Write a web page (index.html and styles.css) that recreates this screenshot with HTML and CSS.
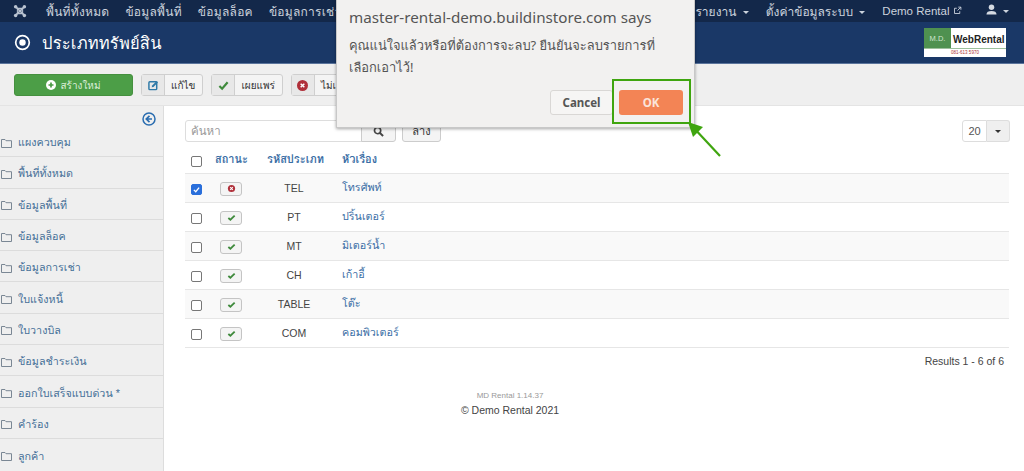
FILE: index.html
```html
<!DOCTYPE html>
<html lang="th">
<head>
<meta charset="utf-8">
<title>ประเภททรัพย์สิน</title>
<link rel="stylesheet" href="styles.css">
</head>
<body>
<nav class="topbar">
  <svg class="joomla" viewBox="0 0 16 16" width="14" height="14"><path d="M3.500 3.500l9 9M12.500 3.500l-9 9" stroke="#b9c3d1" stroke-width="2" fill="none"/><path d="M5 5h6v6H5z" fill="none" stroke="#b9c3d1" stroke-width="1.200"/><circle cx="3" cy="3" r="2" fill="#b9c3d1"/><circle cx="13" cy="3" r="2" fill="#b9c3d1"/><circle cx="3" cy="13" r="2" fill="#b9c3d1"/><circle cx="13" cy="13" r="2" fill="#b9c3d1"/></svg>
  <ul class="menu menu-left">
    <li>พื้นที่ทั้งหมด</li>
    <li>ข้อมูลพื้นที่</li>
    <li>ข้อมูลล็อค</li>
    <li>ข้อมูลการเช่า</li>
  </ul>
  <ul class="menu menu-right">
    <li>รายงาน <span class="caret"></span></li>
    <li>ตั้งค่าข้อมูลระบบ <span class="caret"></span></li>
    <li class="latin">Demo Rental <svg viewBox="0 0 12 12" width="9" height="9"><path d="M9 7v3H2V3h3M7 1.500h3.500V5M10.500 1.500L6 6" stroke="#c8d0dc" fill="none" stroke-width="1.200"/></svg></li>
    <li class="user"><svg viewBox="0 0 12 12" width="11" height="11"><circle cx="6" cy="3.500" r="3" fill="#d5dae2"/><path d="M0.500 11.500c0-3 2-4 5.500-4s5.500 1 5.500 4z" fill="#d5dae2"/></svg> <span class="caret"></span></li>
  </ul>
</nav>
<header class="titlebar">
  <div class="title">
    <svg viewBox="0 0 18 18" width="17" height="17"><circle cx="9" cy="9" r="7.200" stroke="#fff" stroke-width="1.800" fill="none"/><circle cx="9" cy="9" r="3.400" fill="#fff"/></svg>
    <h1>ประเภททรัพย์สิน</h1>
  </div>
  <div class="logo">
    <div class="logo-top"><span class="logo-md">M.D.</span><span class="logo-web">WebRental</span></div>
    <div class="logo-tel">081-613 5970</div>
  </div>
</header>
<div class="toolbar">
  <button class="btn-new"><svg viewBox="0 0 12 12" width="10" height="10"><circle cx="6" cy="6" r="6" fill="#fff"/><path d="M6 3v6M3 6h6" stroke="#4a9a44" stroke-width="2"/></svg> สร้างใหม่</button>
  <div class="tool"><span class="tool-icon"><svg viewBox="0 0 12 12" width="11" height="11"><rect x="1" y="2" width="8.500" height="8.500" rx="1" fill="none" stroke="#2f7aa8" stroke-width="1.600"/><path d="M4 8l.5-2 5-5 1.500 1.500-5 5z" fill="#2f7aa8"/></svg></span><span class="tool-label">แก้ไข</span></div>
  <div class="tool"><span class="tool-icon"><svg viewBox="0 0 12 12" width="11" height="11"><path d="M1.500 6.500l3 3 6-7" fill="none" stroke="#3f8a3c" stroke-width="2.400"/></svg></span><span class="tool-label">เผยแพร่</span></div>
  <div class="tool"><span class="tool-icon"><svg viewBox="0 0 12 12" width="11" height="11"><circle cx="6" cy="6" r="6" fill="#b0303a"/><path d="M4 4l4 4M8 4l-4 4" stroke="#fff" stroke-width="1.600"/></svg></span><span class="tool-label">ไม่เผยแพร่</span></div>
</div>
<main class="layout">
  <aside class="sidebar">
    <div class="collapse"><svg viewBox="0 0 14 14" width="14" height="14"><circle cx="7" cy="7" r="6" fill="none" stroke="#2a6db0" stroke-width="1.500"/><path d="M7.500 3.800L4.300 7l3.200 3.200M4.500 7h5.500" fill="none" stroke="#2a6db0" stroke-width="1.700"/></svg></div>
    <ul class="side-list">
      <li><svg class="folder" viewBox="0 0 11 10"><path d="M.5 1.500h3.500l1 1.200h5.500v6.800H.5z" fill="none" stroke="#7a8794"/></svg>แผงควบคุม</li>
      <li><svg class="folder" viewBox="0 0 11 10"><path d="M.5 1.500h3.500l1 1.200h5.500v6.800H.5z" fill="none" stroke="#7a8794"/></svg>พื้นที่ทั้งหมด</li>
      <li><svg class="folder" viewBox="0 0 11 10"><path d="M.5 1.500h3.500l1 1.200h5.500v6.800H.5z" fill="none" stroke="#7a8794"/></svg>ข้อมูลพื้นที่</li>
      <li><svg class="folder" viewBox="0 0 11 10"><path d="M.5 1.500h3.500l1 1.200h5.500v6.800H.5z" fill="none" stroke="#7a8794"/></svg>ข้อมูลล็อค</li>
      <li><svg class="folder" viewBox="0 0 11 10"><path d="M.5 1.500h3.500l1 1.200h5.500v6.800H.5z" fill="none" stroke="#7a8794"/></svg>ข้อมูลการเช่า</li>
      <li><svg class="folder" viewBox="0 0 11 10"><path d="M.5 1.500h3.500l1 1.200h5.500v6.800H.5z" fill="none" stroke="#7a8794"/></svg>ใบแจ้งหนี้</li>
      <li><svg class="folder" viewBox="0 0 11 10"><path d="M.5 1.500h3.500l1 1.200h5.500v6.800H.5z" fill="none" stroke="#7a8794"/></svg>ใบวางบิล</li>
      <li><svg class="folder" viewBox="0 0 11 10"><path d="M.5 1.500h3.500l1 1.200h5.500v6.800H.5z" fill="none" stroke="#7a8794"/></svg>ข้อมูลชำระเงิน</li>
      <li><svg class="folder" viewBox="0 0 11 10"><path d="M.5 1.500h3.500l1 1.200h5.500v6.800H.5z" fill="none" stroke="#7a8794"/></svg>ออกใบเสร็จแบบด่วน *</li>
      <li><svg class="folder" viewBox="0 0 11 10"><path d="M.5 1.500h3.500l1 1.200h5.500v6.800H.5z" fill="none" stroke="#7a8794"/></svg>คำร้อง</li>
      <li><svg class="folder" viewBox="0 0 11 10"><path d="M.5 1.500h3.500l1 1.200h5.500v6.800H.5z" fill="none" stroke="#7a8794"/></svg>ลูกค้า</li>
    </ul>
  </aside>
  <section class="content">
    <div class="filters">
      <div class="search"><span class="search-input">ค้นหา</span><span class="search-btn"><svg viewBox="0 0 12 12" width="11" height="11"><circle cx="5" cy="5" r="3.400" fill="none" stroke="#444" stroke-width="1.800"/><path d="M7.500 7.500L11 11" stroke="#444" stroke-width="2.200"/></svg></span><span class="clear-btn">ล้าง</span></div>
      <div class="limit"><span class="limit-val">20</span><span class="limit-arrow"><span class="caret dark"></span></span></div>
    </div>
    <table class="grid">
      <thead><tr><th class="c-check"><span class="cb"></span></th><th class="c-status">สถานะ</th><th class="c-code">รหัสประเภท</th><th>หัวเรื่อง</th></tr></thead>
      <tbody>
        <tr><td class="c-check"><span class="cb on"><svg viewBox="0 0 12 12"><path d="M2.500 6.500l2.500 2.500 4.500-5.500" fill="none" stroke="#fff" stroke-width="1.800"/></svg></span></td><td class="c-status"><span class="st"><svg viewBox="0 0 10 10"><circle cx="5" cy="5" r="4" fill="#b0303a"/><path d="M3.500 3.500l3 3M6.500 3.500l-3 3" stroke="#fff" stroke-width="1.200"/></svg></span></td><td class="c-code">TEL</td><td class="t-link">โทรศัพท์</td></tr>
        <tr><td class="c-check"><span class="cb"></span></td><td class="c-status"><span class="st"><svg viewBox="0 0 10 10"><path d="M1.500 5.500l2.300 2 4.700-4.500" fill="none" stroke="#3f8a3c" stroke-width="2"/></svg></span></td><td class="c-code">PT</td><td class="t-link">ปริ้นเตอร์</td></tr>
        <tr><td class="c-check"><span class="cb"></span></td><td class="c-status"><span class="st"><svg viewBox="0 0 10 10"><path d="M1.500 5.500l2.300 2 4.700-4.500" fill="none" stroke="#3f8a3c" stroke-width="2"/></svg></span></td><td class="c-code">MT</td><td class="t-link">มิเตอร์น้ำ</td></tr>
        <tr><td class="c-check"><span class="cb"></span></td><td class="c-status"><span class="st"><svg viewBox="0 0 10 10"><path d="M1.500 5.500l2.300 2 4.700-4.500" fill="none" stroke="#3f8a3c" stroke-width="2"/></svg></span></td><td class="c-code">CH</td><td class="t-link">เก้าอี้</td></tr>
        <tr><td class="c-check"><span class="cb"></span></td><td class="c-status"><span class="st"><svg viewBox="0 0 10 10"><path d="M1.500 5.500l2.300 2 4.700-4.500" fill="none" stroke="#3f8a3c" stroke-width="2"/></svg></span></td><td class="c-code">TABLE</td><td class="t-link">โต๊ะ</td></tr>
        <tr><td class="c-check"><span class="cb"></span></td><td class="c-status"><span class="st"><svg viewBox="0 0 10 10"><path d="M1.500 5.500l2.300 2 4.700-4.500" fill="none" stroke="#3f8a3c" stroke-width="2"/></svg></span></td><td class="c-code">COM</td><td class="t-link">คอมพิวเตอร์</td></tr>
      </tbody>
    </table>
    <p class="results">Results 1 - 6 of 6</p>
    <div class="footer">
      <p class="version">MD Rental 1.14.37</p>
      <p class="copy">© Demo Rental 2021</p>
    </div>
  </section>
</main>
<div class="dialog">
  <p class="d-title">master-rental-demo.buildinstore.com says</p>
  <p class="d-msg">คุณแน่ใจแล้วหรือที่ต้องการจะลบ? ยืนยันจะลบรายการที่เลือกเอาไว้!</p>
  <div class="d-actions"><button class="d-cancel">Cancel</button><button class="d-ok">OK</button></div>
</div>
<div class="ok-mark"></div>
<svg class="ok-arrow" viewBox="0 0 40 40" width="40" height="40"><path d="M4 4L32 34" stroke="#3fa50f" stroke-width="2.200" fill="none"/><path d="M0 0L15 5L5 15z" fill="#3fa50f"/></svg>
</body>
</html>
```

FILE: styles.css
```css
* { box-sizing: border-box; }
html, body { margin: 0; padding: 0; }
body {
  width: 1024px; height: 471px; overflow: hidden; position: relative;
  font-family: "Liberation Sans", Loma, Garuda, "Noto Sans Thai", "Noto Sans", sans-serif;
  font-size: 11px; color: #333; background: #fff;
}
ul { list-style: none; margin: 0; padding: 0; }
p { margin: 0; }

.topbar {
  height: 22px; background: #13284a; color: #ccd3dd;
  display: flex; align-items: center; font-size: 12px; padding-left: 13px;
}
.joomla { flex: none; margin-right: 19px; }
.menu { display: flex; align-items: center; }
.menu li { white-space: nowrap; }
.menu-left { gap: 16px; }
.menu-left li { letter-spacing: .25px; }
.menu-right { margin-left: auto; gap: 17px; padding-right: 15px; }
.menu li.latin { font-size: 11.500px; }
.menu li.user { margin-left: 7px; }
.caret {
  display: inline-block; width: 0; height: 0; vertical-align: middle; margin-left: 3px;
  border-left: 3px solid transparent; border-right: 3px solid transparent; border-top: 3px solid #ccd3dd;
}
.caret.dark { border-top-color: #333; margin: 0; }

.titlebar {
  height: 42px; background: #1a3867; border-bottom: 1px solid #5a749c;
  display: flex; align-items: center; justify-content: space-between; padding: 0 18px 0 14px;
}
.title { display: flex; align-items: center; gap: 11px; color: #fff; }
h1 { margin: 0; font-size: 16.500px; font-weight: 400; letter-spacing: .2px; }
.logo { width: 82px; height: 29px; background: #fff; display: flex; flex-direction: column; }
.logo-top { display: flex; height: 21px; align-items: stretch; border-bottom: 1px solid #9cc09c; }
.logo-md { width: 27px; background: #4f9150; color: #cfe5cf; font-size: 7.500px; display: flex; align-items: center; justify-content: center; }
.logo-web { font-size: 10px; font-weight: 700; color: #222; display: flex; align-items: center; padding: 2px 0 0 2px; }
.logo-tel { font-size: 4.500px; color: #a33; text-align: center; line-height: 8px; }

.toolbar {
  height: 42px; background: #efefef; border-bottom: 1px solid #e4e4e4;
  display: flex; align-items: flex-start; padding: 10px 0 0 14px; gap: 8px;
}
.btn-new {
  width: 119px; height: 22px; border: 1px solid #45903f; border-radius: 3px;
  background: #4c9e47; color: #dcefda; font: inherit; font-size: 10px;
  display: flex; align-items: center; justify-content: center; gap: 4px; padding: 0;
}
.tool {
  height: 22px; display: flex; align-items: stretch; background: #f4f4f4;
  border: 1px solid #cfcfcf; border-radius: 3px; font-size: 10px;
}
.tool-icon { width: 23px; display: flex; align-items: center; justify-content: center; background: #e8e8e8; border-right: 1px solid #cfcfcf; }
.tool-label { padding: 0 7px 0 6px; display: flex; align-items: center; }

.layout { display: flex; height: 365px; }
.sidebar { width: 164px; flex: none; background: #efefef; border-right: 1px solid #ddd; }
.collapse { height: 20px; display: flex; justify-content: flex-end; align-items: center; padding: 6px 7px 0 0; }
.side-list li {
  height: 31.300px; display: flex; align-items: center; gap: 6px; padding-top: 3px;
  font-size: 10.750px; color: #466f98; border-bottom: 1px solid #dcdcdc;
}
.side-list li:last-child { border-bottom: 0; }
.folder { width: 11px; height: 10px; flex: none; margin-left: 1px; }

.content { flex: 1; padding: 14px 14px 0 21px; min-width: 0; }
.filters { display: flex; justify-content: space-between; align-items: flex-start; height: 23px; }
.search { display: flex; align-items: stretch; height: 22px; }
.search-input { width: 177px; border: 1px solid #ddd; border-radius: 3px 0 0 3px; color: #999; font-size: 11.500px; padding: 0 5px; display: flex; align-items: center; }
.search-btn { width: 35px; background: #f4f4f4; border: 1px solid #ccc; border-radius: 0 3px 3px 0; display: flex; align-items: center; justify-content: center; margin-left: -1px; }
.clear-btn { width: 39px; margin-left: 6px; background: #f4f4f4; border: 1px solid #ccc; border-radius: 3px; font-size: 11px; display: flex; align-items: center; justify-content: center; }
.limit { display: flex; height: 22px; }
.limit-val { width: 25px; border: 1px solid #ddd; border-radius: 3px 0 0 3px; color: #555; font-size: 11px; display: flex; align-items: center; justify-content: center; }
.limit-arrow { width: 23px; background: #efefef; border: 1px solid #ddd; border-left: 0; border-radius: 0 3px 3px 0; display: flex; align-items: center; justify-content: center; }

.grid { width: 824px; border-collapse: collapse; margin-top: 3px; table-layout: fixed; }
.grid th { height: 27px; text-align: left; font-size: 11px; color: #3a6ea5; font-weight: 700; padding: 0; white-space: nowrap; }
.grid td { height: 29px; padding: 0; border-top: 1px solid #e6e6e6; font-size: 10.500px; color: #444; }
.grid tbody tr:nth-child(odd) { background: #f9f9f9; }
.grid tbody tr:last-child td { border-bottom: 1px solid #e6e6e6; }
.grid .c-check { width: 30px; padding-left: 6px; vertical-align: middle; }
.grid .c-status { width: 52px; }
.grid td.c-status { padding-left: 5px; }
.grid .c-code { width: 75px; text-align: center; padding-right: 21px; }
.grid td.t-link { color: #3a6ea5; font-size: 10.750px; padding-left: 0; }
.cb { display: block; width: 11px; height: 11px; margin-top: 4px; border: 1px solid #777; border-radius: 2px; background: #fff; }
.cb.on { background: #2a6fdb; border-color: #2a6fdb; }
.cb svg { display: block; width: 9px; height: 9px; }
.st { display: flex; width: 22px; height: 14px; margin-top: 2px; border: 1px solid #c4c4c4; border-radius: 3px; background: #f4f4f4; align-items: center; justify-content: center; }
.st svg { width: 9px; height: 9px; }

.results { text-align: right; font-size: 10.500px; color: #444; margin-top: 7px; padding-right: 6px; }
.footer { width: 650px; text-align: center; margin-top: 24px; }
.version { font-size: 8px; color: #999; }
.copy { font-size: 10.500px; color: #444; margin-top: 4px; }

.dialog {
  position: absolute; left: 336px; top: -8px; width: 359px; height: 136px; background: #f2f1f0;
  border: 1px solid #c8c8c8; box-shadow: 0 1px 3px rgba(0,0,0,.35); padding: 13px 20px 0 12px;
  font-family: "Noto Sans", Loma, Garuda, "Noto Sans Thai", sans-serif; color: #555;
}
.d-title { font-size: 15.200px; line-height: 22px; }
.d-msg { font-size: 12.900px; line-height: 22px; margin-top: 6px; }
.d-actions { position: absolute; right: 11px; bottom: 12px; display: flex; gap: 6px; }
.d-cancel { width: 63px; height: 25px; background: #f6f5f4; border: 1px solid #d9d7d5; border-radius: 3px; font: 700 11.500px "Noto Sans", sans-serif; color: #555; }
.d-ok { width: 64px; height: 25px; background: #f38455; border: 0; border-radius: 3px; font: 700 11.500px "Noto Sans", sans-serif; color: #fbe4da; }
.ok-mark { position: absolute; left: 612px; top: 79px; width: 79px; height: 45px; border: 2px solid #3fa50f; }
.ok-arrow { position: absolute; left: 688px; top: 122px; }
```
